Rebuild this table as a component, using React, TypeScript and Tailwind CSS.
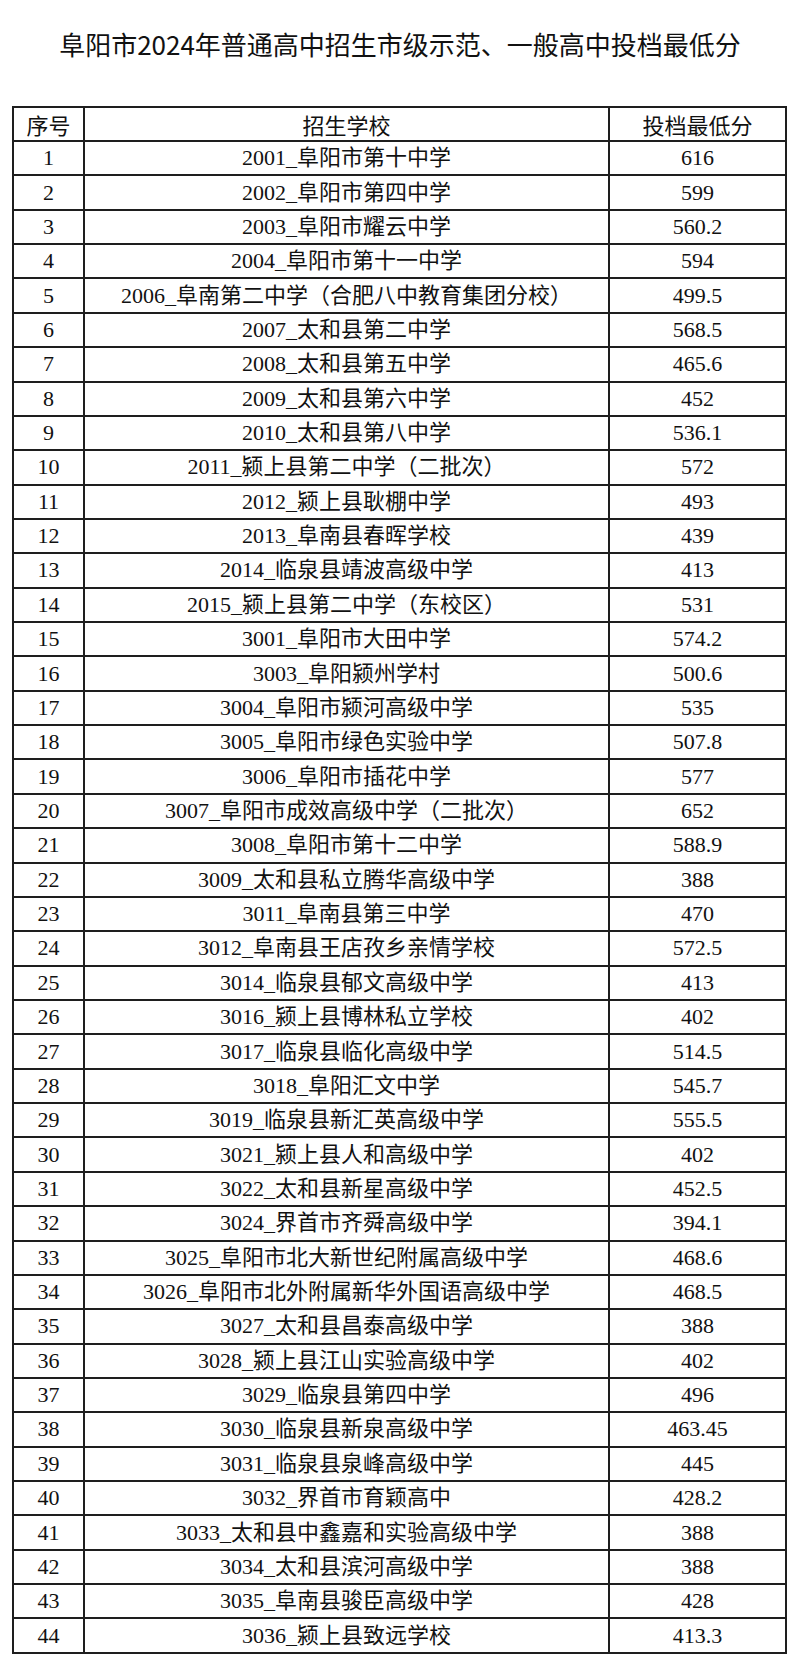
import React from "react";

const rows: [string, string][] = [
  ["2001_阜阳市第十中学", "616"],
  ["2002_阜阳市第四中学", "599"],
  ["2003_阜阳市耀云中学", "560.2"],
  ["2004_阜阳市第十一中学", "594"],
  ["2006_阜南第二中学（合肥八中教育集团分校）", "499.5"],
  ["2007_太和县第二中学", "568.5"],
  ["2008_太和县第五中学", "465.6"],
  ["2009_太和县第六中学", "452"],
  ["2010_太和县第八中学", "536.1"],
  ["2011_颍上县第二中学（二批次）", "572"],
  ["2012_颍上县耿棚中学", "493"],
  ["2013_阜南县春晖学校", "439"],
  ["2014_临泉县靖波高级中学", "413"],
  ["2015_颍上县第二中学（东校区）", "531"],
  ["3001_阜阳市大田中学", "574.2"],
  ["3003_阜阳颍州学村", "500.6"],
  ["3004_阜阳市颍河高级中学", "535"],
  ["3005_阜阳市绿色实验中学", "507.8"],
  ["3006_阜阳市插花中学", "577"],
  ["3007_阜阳市成效高级中学（二批次）", "652"],
  ["3008_阜阳市第十二中学", "588.9"],
  ["3009_太和县私立腾华高级中学", "388"],
  ["3011_阜南县第三中学", "470"],
  ["3012_阜南县王店孜乡亲情学校", "572.5"],
  ["3014_临泉县郁文高级中学", "413"],
  ["3016_颍上县博林私立学校", "402"],
  ["3017_临泉县临化高级中学", "514.5"],
  ["3018_阜阳汇文中学", "545.7"],
  ["3019_临泉县新汇英高级中学", "555.5"],
  ["3021_颍上县人和高级中学", "402"],
  ["3022_太和县新星高级中学", "452.5"],
  ["3024_界首市齐舜高级中学", "394.1"],
  ["3025_阜阳市北大新世纪附属高级中学", "468.6"],
  ["3026_阜阳市北外附属新华外国语高级中学", "468.5"],
  ["3027_太和县昌泰高级中学", "388"],
  ["3028_颍上县江山实验高级中学", "402"],
  ["3029_临泉县第四中学", "496"],
  ["3030_临泉县新泉高级中学", "463.45"],
  ["3031_临泉县泉峰高级中学", "445"],
  ["3032_界首市育颖高中", "428.2"],
  ["3033_太和县中鑫嘉和实验高级中学", "388"],
  ["3034_太和县滨河高级中学", "388"],
  ["3035_阜南县骏臣高级中学", "428"],
  ["3036_颍上县致远学校", "413.3"],
];

const serif = "[font-family:'Liberation_Serif','Noto_Sans_CJK_SC',serif]";

export default function App() {
  return (
    <div className="w-[800px] h-[1657px] bg-white text-[#111] overflow-hidden">
      <div className="pt-[26px] text-center text-[26px] leading-[36px] [font-family:'Noto_Sans_CJK_SC',sans-serif]">
        阜阳市2024年普通高中招生市级示范、一般高中投档最低分
      </div>
      <div className="mt-[44px] ml-[12px] w-[775px] grid grid-cols-[69px_523px_175px] grid-rows-[32px_repeat(44,32.36px)] gap-[2px] p-[2px] bg-[#1e1e1e]">
        <div className="bg-white flex items-center justify-center text-[22px] [font-family:'Noto_Sans_CJK_SC',sans-serif]">序号</div>
        <div className="bg-white flex items-center justify-center text-[22px] [font-family:'Noto_Sans_CJK_SC',sans-serif]">招生学校</div>
        <div className="bg-white flex items-center justify-center text-[22px] [font-family:'Noto_Sans_CJK_SC',sans-serif]">投档最低分</div>
        {rows.map(([name, score], i) => (
          <React.Fragment key={i}>
            <div className={`bg-white flex items-center justify-center text-[22px] leading-none ${serif}`}>{i + 1}</div>
            <div className={`bg-white flex items-center justify-center text-[22px] leading-none whitespace-nowrap ${serif}`}>{name}</div>
            <div className={`bg-white flex items-center justify-center text-[22px] leading-none ${serif}`}>{score}</div>
          </React.Fragment>
        ))}
      </div>
    </div>
  );
}
